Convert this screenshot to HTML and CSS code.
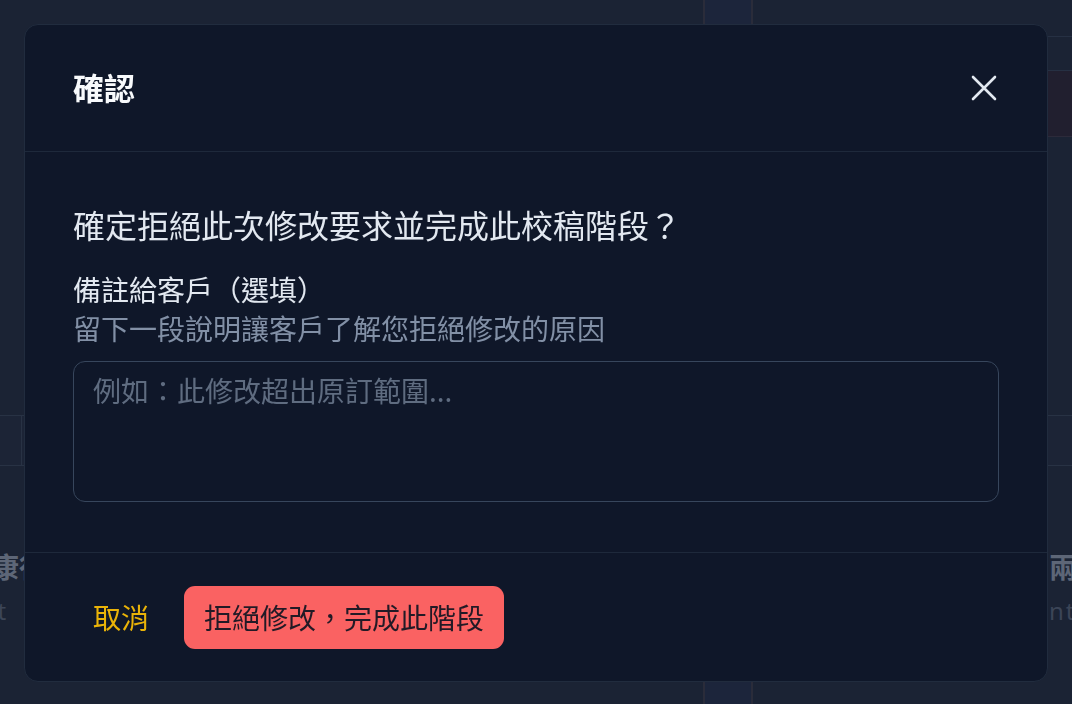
FILE: index.html
```html
<!DOCTYPE html>
<html lang="zh-Hant">
<head>
<meta charset="utf-8">
<title>確認</title>
<link rel="stylesheet" href="styles.css">
</head>
<body>
<div class="page">
  <div class="col col-left">
    <div class="left-top"></div>
    <div class="band"><div class="band-box"></div></div>
    <div class="side-title left-title">健康行程</div>
    <div class="side-sub left-sub">Plan client</div>
  </div>
  <div class="col col-mid"></div>
  <div class="col col-right">
    <div class="r-row r-row1"></div>
    <div class="r-row r-row2"></div>
    <div class="r-row r-box"></div>
    <div class="r-fill"></div>
    <div class="band"></div>
    <div class="side-title right-title">兩</div>
    <div class="side-sub right-sub">ntClient</div>
  </div>
</div>

<div class="backdrop">
  <div class="modal" role="dialog" aria-labelledby="modal-title">
    <div class="modal-header">
      <h2 class="modal-title" id="modal-title">確認</h2>
      <button class="close-btn" type="button" aria-label="關閉">
        <svg viewBox="0 0 28 28" width="28" height="28" aria-hidden="true">
          <path d="M3 3 L25 25 M25 3 L3 25" stroke="currentColor" stroke-width="2.6" stroke-linecap="round" fill="none"/>
        </svg>
      </button>
    </div>
    <div class="modal-body">
      <p class="question">確定拒絕此次修改要求並完成此校稿階段？</p>
      <label class="field-label" for="note">備註給客戶（選填）</label>
      <p class="field-hint">留下一段說明讓客戶了解您拒絕修改的原因</p>
      <textarea class="note" id="note" placeholder="例如：此修改超出原訂範圍..."></textarea>
    </div>
    <div class="modal-footer">
      <button class="btn-cancel" type="button">取消</button>
      <button class="btn-danger" type="button">拒絕修改，完成此階段</button>
    </div>
  </div>
</div>
</body>
</html>
```

FILE: styles.css
```css
* { box-sizing: border-box; }

html, body {
  margin: 0;
  padding: 0;
  width: 1072px;
  height: 704px;
  overflow: hidden;
  background: #1b2334;
  font-family: "Noto Sans CJK TC", "Noto Sans", sans-serif;
}

/* dimmed page behind the dialog */
.page {
  display: grid;
  grid-template-columns: 703px 50px 1fr;
  height: 704px;
}

.col { display: flex; flex-direction: column; min-width: 0; overflow: hidden; }

.col-mid {
  background: #1c253b;
  border-left: 2px solid #2a2c3a;
  border-right: 2px solid #2a2c3a;
}

.left-top { height: 415px; flex: none; }

.band {
  height: 51px;
  flex: none;
  border-top: 1px solid #283244;
  border-bottom: 1px solid #283244;
  background: #1c2436;
}

.band-box {
  width: 22px;
  height: 100%;
  border-right: 1px solid #283244;
}

.side-title {
  margin-top: 80px;
  font-size: 28px;
  font-weight: 700;
  line-height: 40px;
  color: #5d6677;
  white-space: nowrap;
}

.side-sub {
  margin-top: 8px;
  font-family: "Noto Sans", sans-serif;
  font-size: 24px;
  line-height: 34px;
  color: #3c4557;
  white-space: nowrap;
  letter-spacing: 2px;
}

.left-title { margin-left: -37px; }
.left-sub { margin-left: -130px; }

.right-title, .right-sub { padding-left: 296px; }

.r-row { flex: none; border-bottom: 1px solid #263043; }
.r-row1 { height: 37px; }
.r-row2 { height: 34px; }
.r-box { height: 66px; background: #211f2f; border-bottom: 1px solid #2c2a3a; }
.r-fill { height: 278px; flex: none; }

/* dialog */
.backdrop {
  position: fixed;
  inset: 0;
  display: flex;
  justify-content: center;
  align-items: flex-start;
  padding-top: 24px;
}

.modal {
  width: 1024px;
  height: 658px;
  background: #0f1729;
  border: 1px solid #212c3e;
  border-radius: 14px;
  display: flex;
  flex-direction: column;
  overflow: hidden;
}

.modal-header {
  height: 127px;
  flex: none;
  display: flex;
  align-items: center;
  justify-content: space-between;
  padding: 0 48px;
  border-bottom: 1px solid #1e293b;
}

.modal-title {
  margin: 0 0 3px;
  font-size: 31px;
  font-weight: 700;
  line-height: 46px;
  color: #f8fafc;
}

.close-btn {
  width: 28px;
  height: 28px;
  padding: 0;
  margin-right: 1px;
  border: 0;
  background: transparent;
  color: #e2e8f0;
  display: flex;
  cursor: pointer;
}

.modal-body {
  flex: 1;
  display: flex;
  flex-direction: column;
  padding: 48px 48px 50px;
}

.question {
  margin: 0;
  font-size: 32px;
  line-height: 48px;
  color: #e2e8f0;
}

.field-label {
  margin-top: 22px;
  font-size: 28px;
  line-height: 39px;
  color: #e2e8f0;
}

.field-hint {
  margin: 0;
  font-size: 28px;
  line-height: 39px;
  color: #8290a6;
}

.note {
  margin-top: 13px;
  height: 141px;
  width: 100%;
  resize: none;
  padding: 8px 19px;
  font-family: inherit;
  font-size: 28px;
  line-height: 40px;
  color: #e2e8f0;
  background: #0f1729;
  border: 1px solid #37465c;
  border-radius: 12px;
  outline: none;
}

.note::placeholder { color: #5f6c80; }

.modal-footer {
  flex: none;
  height: 129px;
  display: flex;
  align-items: center;
  gap: 14px;
  padding: 0 48px;
  border-top: 1px solid #1e293b;
}

.btn-cancel {
  font-family: inherit;
  font-size: 28px;
  line-height: 42px;
  padding: 10px 20px;
  border: 0;
  background: transparent;
  color: #eab308;
  cursor: pointer;
}

.btn-danger {
  font-family: inherit;
  font-size: 28px;
  line-height: 43px;
  padding: 10px 20px;
  margin-left: 1px;
  border: 0;
  border-radius: 11px;
  background: #fa6262;
  color: #221a26;
  cursor: pointer;
}
```
